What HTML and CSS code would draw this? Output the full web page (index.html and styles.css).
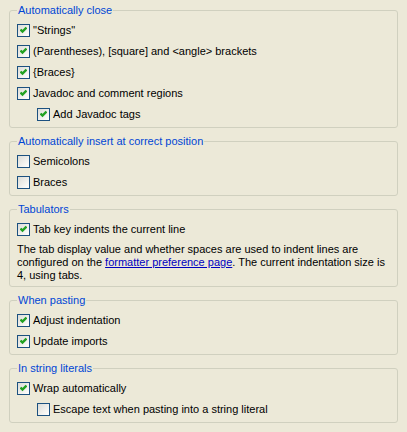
FILE: index.html
```html
<!DOCTYPE html>
<html>
<head>
<meta charset="utf-8">
<link rel="stylesheet" href="styles.css">
</head>
<body>
<fieldset class="group g1">
  <legend>Automatically close</legend>
  <div class="row"><span class="cb on"></span><span>"Strings"</span></div>
  <div class="row"><span class="cb on"></span><span>(Parentheses), [square] and &lt;angle&gt; brackets</span></div>
  <div class="row"><span class="cb on"></span><span>{Braces}</span></div>
  <div class="row"><span class="cb on"></span><span>Javadoc and comment regions</span></div>
  <div class="row sub"><span class="cb on"></span><span>Add Javadoc tags</span></div>
</fieldset>
<fieldset class="group g2">
  <legend>Automatically insert at correct position</legend>
  <div class="row"><span class="cb"></span><span>Semicolons</span></div>
  <div class="row"><span class="cb"></span><span>Braces</span></div>
</fieldset>
<fieldset class="group g3">
  <legend>Tabulators</legend>
  <div class="row"><span class="cb on"></span><span>Tab key indents the current line</span></div>
  <p class="note">The tab display value and whether spaces are used to indent lines are configured on the <a class="link" href="#">formatter preference page</a>. The current indentation size is 4, using tabs.</p>
</fieldset>
<fieldset class="group g4">
  <legend>When pasting</legend>
  <div class="row"><span class="cb on"></span><span>Adjust indentation</span></div>
  <div class="row"><span class="cb on"></span><span>Update imports</span></div>
</fieldset>
<fieldset class="group g5">
  <legend>In string literals</legend>
  <div class="row"><span class="cb on"></span><span>Wrap automatically</span></div>
  <div class="row sub"><span class="cb"></span><span>Escape text when pasting into a string literal</span></div>
</fieldset>
</body>
</html>
```
FILE: styles.css
```css
html, body {
  background: #ECE9D8;
}
body {
  margin: 4px 9px 0 9px;
  font-family: "Liberation Sans", Arial, sans-serif;
  font-size: 11px;
  line-height: 13px;
  color: #000;
}
.group {
  margin: 0 0 7px 0;
  border: 1px solid #D0D0BF;
  border-radius: 3px;
  padding: 3px 7px 2px 7px;
  min-width: 0;
}
.group legend {
  padding: 0 1px;
  margin-left: 0;
  color: #0046D5;
}
.row {
  display: flex;
  align-items: center;
  height: 21px;
  gap: 3px;
}
.row.sub {
  padding-left: 20px;
}
.cb {
  box-sizing: border-box;
  width: 13px;
  height: 13px;
  flex: none;
  border: 1px solid #1C5180;
  background: linear-gradient(135deg, #DCDCD7 0%, #F5F5F2 70%, #FFFFFF 100%);
  position: relative;
}
.cb.on::after {
  content: "";
  position: absolute;
  left: 2px;
  top: 1px;
  width: 7px;
  height: 8px;
  background: no-repeat center/contain url("data:image/svg+xml;utf8,<svg xmlns='http://www.w3.org/2000/svg' width='7' height='8' viewBox='0 0 7 8'><polyline points='0.5,3.5 2.5,5.5 6.5,1.5' fill='none' stroke='%2321A121' stroke-width='2.4'/></svg>");
}
.note {
  margin: 3px 0 2px 0;
}
.link {
  color: #0000C0;
  text-decoration: underline;
}
```
